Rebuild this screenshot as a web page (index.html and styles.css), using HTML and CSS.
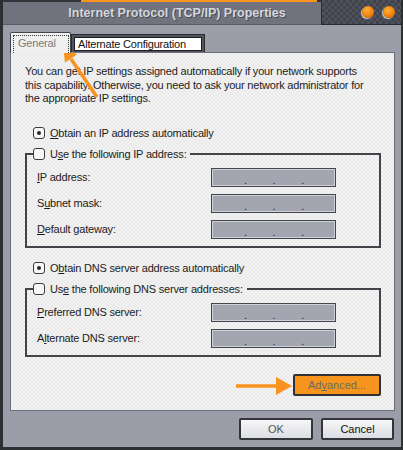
FILE: index.html
```html
<!DOCTYPE html>
<html lang="en">
<head>
	<meta charset="UTF-8">
	<title>Internet Protocol (TCP/IP) Properties</title>
	<link rel="stylesheet" href="styles.css">
</head>
<body>
	<div class="window">
		<div class="titlebar">
			<div class="title">
				<div class="strip"><span class="glow"></span></div>
				<div class="caption">Internet Protocol (TCP/IP) Properties</div>
			</div>
			<div class="controls">
				<span class="orb"></span>
				<span class="orb"></span>
			</div>
		</div>

		<div class="tabs">
			<div class="tab active"><span class="focus">General</span></div>
			<div class="tab"><span class="label">Alternate Configuration</span></div>
		</div>

		<div class="panel">
			<p class="intro">You can get IP settings assigned automatically if your network supports<br>this capability. Otherwise, you need to ask your network administrator for<br>the appropriate IP settings.</p>

			<div class="option first"><span class="radio checked"></span><span><u>O</u>btain an IP address automatically</span></div>

			<fieldset class="group">
				<legend class="option"><span class="radio"></span><span>U<u>s</u>e the following IP address:</span></legend>
				<div class="row"><span class="name"><u>I</u>P address:</span><span class="ip"><i>.</i><i>.</i><i>.</i></span></div>
				<div class="row"><span class="name">S<u>u</u>bnet mask:</span><span class="ip"><i>.</i><i>.</i><i>.</i></span></div>
				<div class="row"><span class="name"><u>D</u>efault gateway:</span><span class="ip"><i>.</i><i>.</i><i>.</i></span></div>
			</fieldset>

			<div class="option second"><span class="radio checked"></span><span>O<u>b</u>tain DNS server address automatically</span></div>

			<fieldset class="group">
				<legend class="option"><span class="radio"></span><span>Us<u>e</u> the following DNS server addresses:</span></legend>
				<div class="row"><span class="name"><u>P</u>referred DNS server:</span><span class="ip"><i>.</i><i>.</i><i>.</i></span></div>
				<div class="row"><span class="name">A<u>l</u>ternate DNS server:</span><span class="ip"><i>.</i><i>.</i><i>.</i></span></div>
			</fieldset>

			<div class="advanced-row">
				<button class="advanced">Ad<u>v</u>anced...</button>
			</div>
		</div>

		<div class="buttons">
			<button class="btn">OK</button>
			<button class="btn cancel">Cancel</button>
		</div>

		<svg class="arrows" width="403" height="450" viewBox="0 0 403 450">
			<line x1="71" y1="59" x2="97" y2="97" stroke="#f7931e" stroke-width="3.5"/>
			<polygon points="63,47 65,62.5 77,54.5" fill="#f7931e"/>
			<line x1="236" y1="386" x2="278" y2="386" stroke="#f7931e" stroke-width="3.5"/>
			<polygon points="292,386 276,377 276,395" fill="#f7931e"/>
		</svg>
	</div>
</body>
</html>
```

FILE: styles.css
```css
body {
	margin:0;
	background:#2c2d31;
	font-family:"Liberation Sans", Arial, sans-serif;
	font-size:11px;
	letter-spacing:-0.2px;
	color:#1c1c1c;
}

.window {
	position:relative;
	width:403px;
	height:450px;
	box-sizing:border-box;
	background:#9b9ea9;
	border-left:3px solid #2e2f33;
	border-right:2px solid #2e2f33;
	border-bottom:3px solid #2e2f33;
	display:flex;
	flex-direction:column;
}

/* title bar */
.titlebar {
	height:25px;
	display:flex;
	flex-shrink:0;
}
.title {
	flex:1;
	background:#70737e;
	border-bottom:1px solid #5b5e68;
}
.strip {
	height:2px;
	background:#34353a;
}
.glow {
	display:block;
	margin-left:78px;
	width:236px;
	height:2px;
	background:#f7931e;
}
.caption {
	line-height:23px;
	text-align:center;
	font-weight:bold;
	font-size:12.5px;
	letter-spacing:0;
	color:#d4d6dc;
	text-shadow:1px 1px 0 #4a4c55;
	padding-left:30px;
}
.controls {
	width:73px;
	border-left:1px solid #2a2b2f;
	border-bottom:1px solid #2a2b2f;
	background:repeating-conic-gradient(#40434c 0 25%, #4f525b 0 50%) 0 0/6px 6px;
	display:flex;
	align-items:center;
	justify-content:flex-end;
	gap:9px;
	padding-right:6px;
}
.orb {
	width:12px;
	height:12px;
	border-radius:50%;
	background:radial-gradient(circle at 40% 35%, #ffb040 0, #f78a10 45%, #c45c00 100%);
	box-shadow:-1px 1px 1px #cfd1d6;
}

/* tabs */
.tabs {
	display:flex;
	align-items:flex-end;
	margin:7px 0 0 7px;
	height:20px;
	position:relative;
	z-index:1;
}
.tab {
	box-sizing:border-box;
	height:18px;
	width:134px;
	padding:2px 2px 1px 2px;
	background:#53555d;
	border:1px solid #2a2b2f;
	border-bottom:none;
	display:flex;
}
.tab .label {
	flex:1;
	background:#fff;
	border:1px solid #1d1e21;
	padding-left:3px;
	line-height:12px;
	color:#111;
}
.tab.active {
	width:61px;
	height:21px;
	margin-bottom:-1px;
	background:#f0f0f0;
	border-color:#44464e;
	border-radius:2px 2px 0 0;
	padding:2px 1px 0 2px;
}
.focus {
	flex:1;
	border:1px dotted #3a3a3a;
	border-bottom:none;
	color:#7b7b7b;
	padding-left:4px;
	line-height:14px;
}

/* panel */
.panel {
	box-sizing:border-box;
	margin-left:7px;
	width:385px;
	height:359px;
	border:1px solid #6c6f78;
	background:repeating-conic-gradient(#f3f3f3 0 25%, #e9e9e9 0 50%) 0 0/4px 4px;
	padding:12px 0 0 14px;
}
.intro {
	margin:0;
	white-space:nowrap;
	line-height:13.5px;
}
.option {
	display:flex;
	align-items:center;
	height:13px;
	gap:5px;
	padding-left:8px;
}
.option.first {
	margin-top:21px;
}
.option.second {
	margin-top:14px;
}
.radio {
	box-sizing:border-box;
	width:12px;
	height:12px;
	border:1.5px solid #3b3c40;
	border-radius:3px;
	background:#f7f7f7;
	display:flex;
	align-items:center;
	justify-content:center;
}
.radio.checked::after {
	content:"";
	width:4px;
	height:4px;
	border-radius:50%;
	background:#2a2a2a;
}

.group {
	width:356px;
	box-sizing:border-box;
	margin:8px 0 0 0;
	padding:7px 0 7px 10px;
	border:2px solid #42444a;
}
.group legend.option {
	padding:0 4px 0 0;
	margin-left:-4px;
}
.row {
	display:flex;
	align-items:center;
	height:19px;
}
.row + .row {
	margin-top:7px;
}
.name {
	width:174px;
}
.ip {
	box-sizing:border-box;
	width:125px;
	height:19px;
	border:1px solid #44464e;
	box-shadow:inset 0 0 0 1px #cfd1d8;
	background:#a3a5b0;
	display:flex;
	justify-content:space-between;
	padding:0 31px 0 32px;
}
.ip i {
	font-style:normal;
	line-height:22px;
	color:#222;
}

.advanced-row {
	width:356px;
	display:flex;
	justify-content:flex-end;
	margin-top:17px;
}
.advanced {
	width:88px;
	height:22px;
	font-family:inherit;
	font-size:11px;
	color:#6a6a6a;
	background:#f7941d;
	border:2px solid #2f3136;
	border-radius:2px;
	padding:0;
}

/* bottom buttons */
.buttons {
	display:flex;
	justify-content:flex-end;
	gap:8px;
	margin:7px 7px 0 0;
}
.btn {
	width:74px;
	height:22px;
	font-family:inherit;
	font-size:11px;
	color:#555;
	background:linear-gradient(#f7f7f9, #dcdde2);
	border:2px solid #33353b;
	border-radius:2px;
	padding:0;
}
.btn.cancel {
	width:73px;
	color:#111;
}

.arrows {
	position:absolute;
	left:-3px;
	top:0;
	pointer-events:none;
}
```
